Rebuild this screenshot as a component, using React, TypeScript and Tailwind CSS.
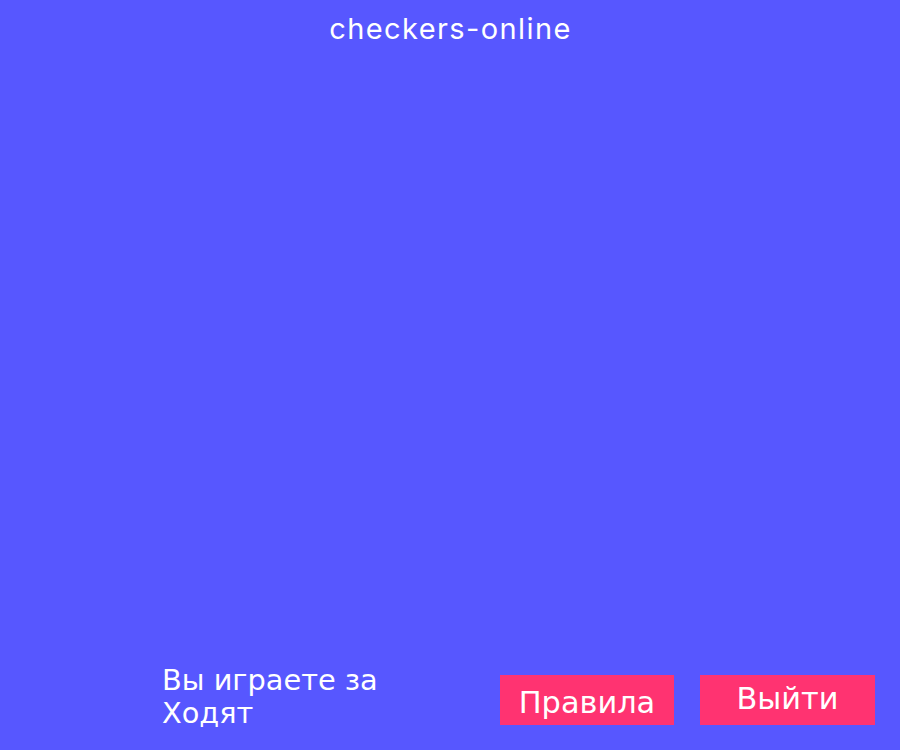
export default function App() {
  return (
    <div className="flex h-[750px] w-full flex-col bg-[#5757ff] text-white">
      <div className="pt-[9px] pl-[1px] text-center font-['Inter',sans-serif] text-[29px] leading-[40px] tracking-[1.4px]">
        checkers-online
      </div>
      <div className="flex-1" />
      <div className="flex items-end pb-[20px] pl-[162px]">
        <div className="w-[338px] font-['DejaVu_Sans',sans-serif] text-[28.8px] leading-[33px]">
          <div>Вы играете за</div>
          <div>Ходят</div>
        </div>
        <button className="mb-[5px] h-[50px] w-[174px] bg-[#ff3371] pt-[4px] text-center font-['DejaVu_Sans',sans-serif] text-[30.4px] leading-[35px] text-white">
          Правила
        </button>
        <button className="mb-[5px] ml-[26px] h-[50px] w-[175px] bg-[#ff3371] pb-[4px] text-center font-['DejaVu_Sans',sans-serif] text-[30.4px] leading-[35px] text-white">
          Выйти
        </button>
      </div>
    </div>
  );
}
